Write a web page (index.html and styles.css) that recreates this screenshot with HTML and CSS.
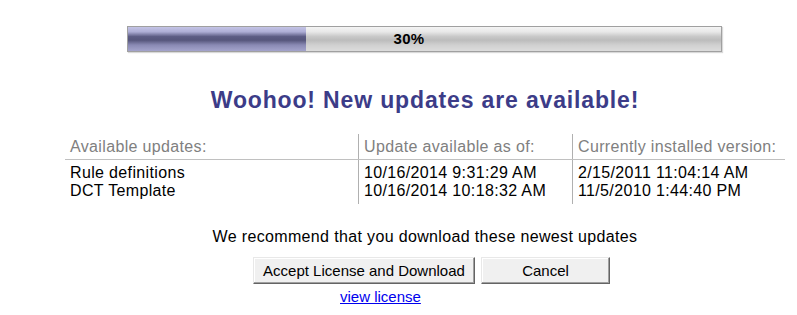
FILE: index.html
```html
<!DOCTYPE html>
<html lang="en">
<head>
    <meta charset="UTF-8">
    <title>Updates available</title>
    <link rel="stylesheet" href="styles.css">
</head>
<body>
    <div class="container">
        <div class="progress">
            <div class="progress-fill" style="width: 30%"></div>
            <div class="progress-text">30%</div>
        </div>

        <h1>Woohoo! New updates are available!</h1>

        <table class="updates">
            <tr>
                <th class="col1">Available updates:</th>
                <th class="col2">Update available as of:</th>
                <th class="col3">Currently installed version:</th>
            </tr>
            <tr class="first">
                <td>Rule definitions</td>
                <td>10/16/2014 9:31:29 AM</td>
                <td>2/15/2011 11:04:14 AM</td>
            </tr>
            <tr class="last">
                <td>DCT Template</td>
                <td>10/16/2014 10:18:32 AM</td>
                <td>11/5/2010 1:44:40 PM</td>
            </tr>
        </table>

        <p class="recommend">We recommend that you download these newest updates</p>

        <div class="buttons">
            <button class="accept">Accept License and Download</button>
            <button class="cancel">Cancel</button>
        </div>

        <div class="license"><a href="#">view license</a></div>
    </div>
</body>
</html>
```

FILE: styles.css
```css
body {
    margin: 0;
    font-family: "Liberation Sans", Arial, sans-serif;
    background-color: white;
    color: #000;
}
.container {
    width: 720px;
    margin-left: 65px;
    padding-top: 26px;
}
.progress {
    position: relative;
    width: 593px;
    height: 24px;
    margin-left: 62px;
    border: 1px solid #a0a0a0;
    background: linear-gradient(#f4f4f4 0%, #e8e8e8 20%, #c8c8c8 40%, #bcbcbc 55%, #d0d0d0 75%, #dcdcdc 100%);
    box-shadow: 1px 1px 1px rgba(0,0,0,0.15);
}
.progress-fill {
    height: 100%;
    background: linear-gradient(#c4c4e6 0%, #aeaed6 20%, #5c5c84 40%, #56567c 55%, #8a8ab4 75%, #a4a4cc 100%);
}
.progress-text {
    position: absolute;
    top: 0;
    left: 0;
    width: 562px;
    line-height: 24px;
    text-align: center;
    font-weight: bold;
    font-size: 15px;
    letter-spacing: 0.3px;
}
h1 {
    margin: 34px 0 0 0;
    font-size: 23px;
    line-height: 28px;
    letter-spacing: 0.85px;
    text-align: center;
    color: #3c3c88;
}
.updates {
    width: 720px;
    margin-top: 20px;
    border-collapse: collapse;
    font-size: 16px;
    letter-spacing: 0.35px;
}
.updates th {
    font-weight: normal;
    color: #808080;
    text-align: left;
    height: 25px;
    padding: 0 0 0 5px;
    border-bottom: 1px solid #c0c0c0;
    vertical-align: middle;
}
.updates td {
    padding: 0 0 0 5px;
    height: 18px;
    line-height: 18px;
}
.updates tr.first td {
    padding-top: 4px;
}
.updates tr.last td {
    padding-bottom: 4px;
}
.updates .col1 {
    width: 288px;
}
.updates .col2 {
    width: 208px;
}
.updates th + th,
.updates td + td {
    border-left: 1px solid #b0b0b0;
}
.recommend {
    margin: 24px 0 0 0;
    text-align: center;
    font-size: 16px;
    line-height: 18px;
    letter-spacing: 0.35px;
}
.buttons {
    display: flex;
    gap: 6px;
    margin: 11px 0 0 188px;
}
button {
    height: 27px;
    padding: 0;
    font-family: "Liberation Sans", Arial, sans-serif;
    font-size: 15px;
    color: #000;
    background-color: #f0f0f0;
    border: 1px solid;
    border-color: #e8e8e8 #646464 #646464 #e8e8e8;
    box-shadow: inset -1px -1px 0 #a0a0a0, inset 1px 1px 0 #ffffff;
}
.accept {
    width: 222px;
}
.cancel {
    width: 129px;
}
.license {
    margin: 4px 0 0 275px;
    font-size: 15px;
}
.license a {
    color: #0000ee;
}
```
